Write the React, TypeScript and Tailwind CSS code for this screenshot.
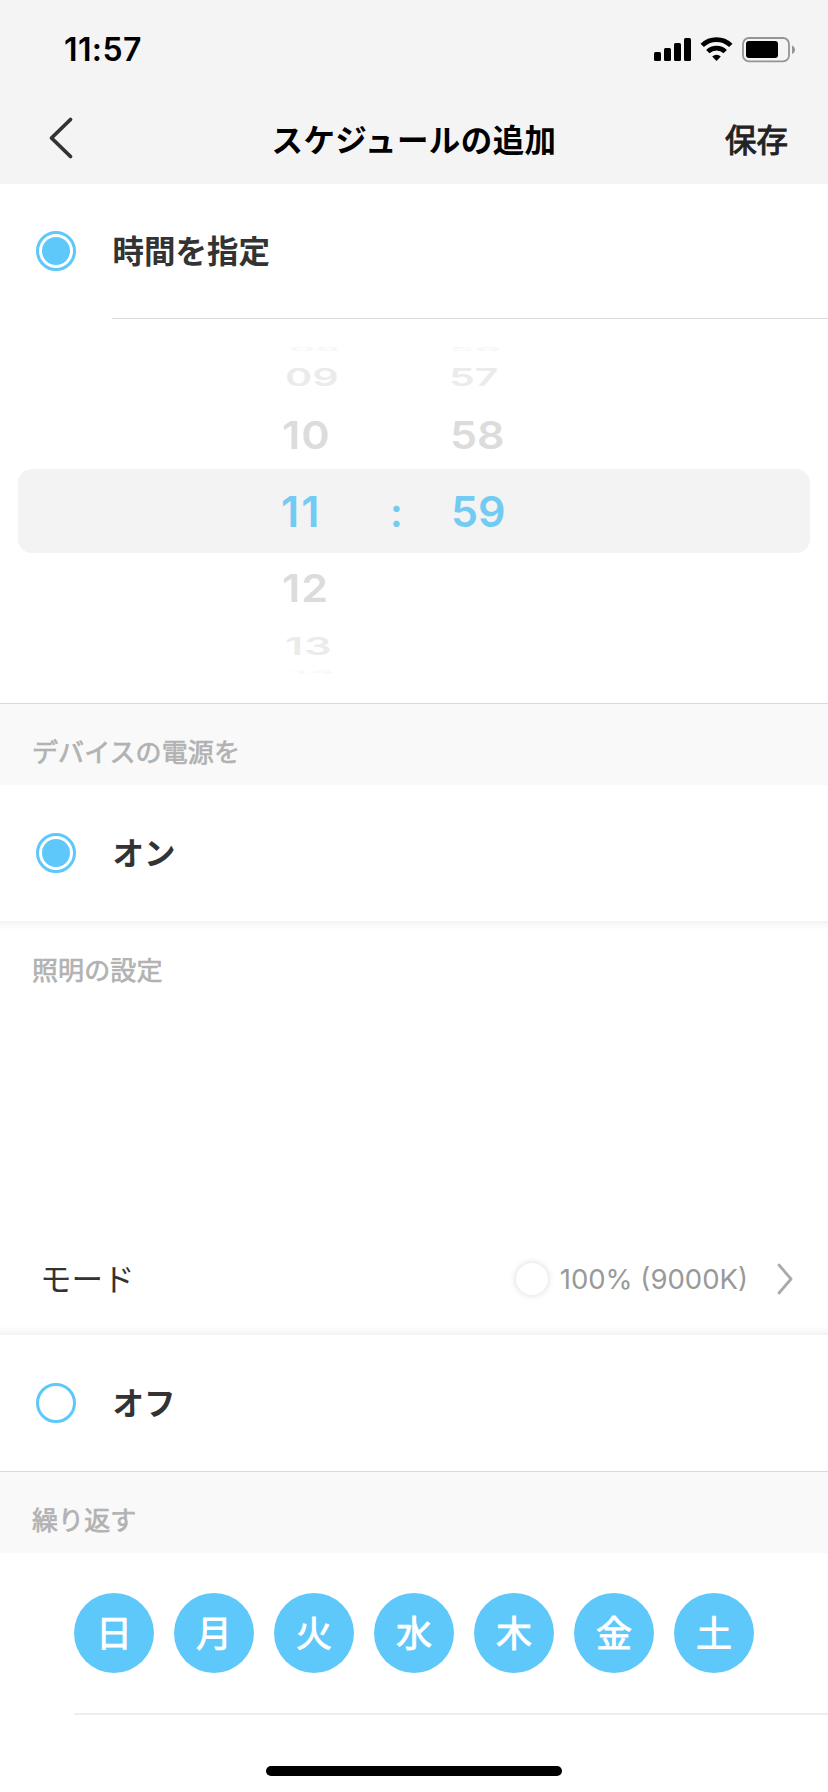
const weekdays = ["日", "月", "火", "水", "木", "金", "土"];

const hours = [
  { value: "08", cls: "h-2 pl-[49px] text-[#f7f7f7]", scale: "scale-x-[0.92] scale-y-[0.12]" },
  { value: "09", cls: "h-12 pl-[45px] text-[#ebebeb]", scale: "scale-x-[0.96] scale-y-[0.56]" },
  { value: "10", cls: "h-[68px] pl-[42px] text-[#dcdcdc]", scale: "tracking-[1px] scale-y-[0.9]" },
  { value: "11", cls: "h-[84px] pl-[41px] text-[#72cbf2]", scale: "tracking-[2px]" },
  { value: "12", cls: "h-[70px] pl-[42px] text-[#dcdcdc]", scale: "tracking-[1px] scale-y-[0.9]" },
  { value: "13", cls: "h-[46px] pl-[45px] text-[#ebebeb]", scale: "tracking-[1px] scale-y-[0.56]" },
  { value: "14", cls: "h-1.5 pl-[49px] text-[#f9f9f9]", scale: "scale-y-[0.11]" },
];

const minutes = [
  { value: "56", cls: "h-2 pl-[47px] text-[#f7f7f7]", scale: "scale-x-[0.95] scale-y-[0.12]" },
  { value: "57", cls: "h-12 pl-[47px] text-[#ebebeb]", scale: "scale-x-[0.95] scale-y-[0.56]" },
  { value: "58", cls: "h-[68px] pl-[48px] text-[#dcdcdc]", scale: "scale-y-[0.9]" },
  { value: "59", cls: "h-[84px] pl-[49px] text-[#72cbf2]", scale: "" },
];

function Radio({ checked = false }: { checked?: boolean }) {
  return (
    <span className="flex size-10 shrink-0 items-center justify-center rounded-full border-3 border-[#5fc8fa]">
      {checked && <span className="size-7 rounded-full bg-[#5fc8fa]" />}
    </span>
  );
}

function OptionRow({ label, checked, cls }: { label: string; checked?: boolean; cls: string }) {
  return (
    <div className={`flex items-center gap-[36.5px] bg-white pl-9 ${cls}`}>
      <Radio checked={checked} />
      <span className="pt-px text-[31.5px] leading-10 font-bold text-[#333]">{label}</span>
    </div>
  );
}

function SectionTitle({ children }: { children: string }) {
  return (
    <div className="h-[82px] border-t border-[#d9d9d9] bg-[#f9f9f9] pt-[29px] pl-8 text-[26px] leading-10 tracking-[0.1px] text-[#b2b2b2] [-webkit-text-stroke:0.7px_#b2b2b2]">
      {children}
    </div>
  );
}

function WheelColumn({ items, className }: { items: typeof hours; className: string }) {
  return (
    <div className={className}>
      {items.map((item) => (
        <div key={item.value} className={`flex items-center ${item.cls}`}>
          <span className={`block origin-left text-[43px] leading-none font-semibold ${item.scale}`}>
            {item.value}
          </span>
        </div>
      ))}
    </div>
  );
}

function StatusIcons() {
  return (
    <svg className="mt-px" width="142" height="26" viewBox="0 0 142 26" fill="none">
      {/* signal */}
      <g fill="#000">
        <rect x="0" y="15" width="7" height="9" rx="1.5" />
        <rect x="10" y="11" width="7" height="13" rx="1.5" />
        <rect x="20" y="6" width="7" height="18" rx="1.5" />
        <rect x="30" y="1" width="7" height="23" rx="1.5" />
      </g>
      {/* wifi */}
      <g stroke="#000" strokeWidth="4.8">
        <path d="M48.2 8.4a20.5 20.5 0 0 1 28.6 0" />
        <path d="M53.8 14.6a12.5 12.5 0 0 1 17.4 0" />
      </g>
      <path d="M58.2 19.4a6.5 6.5 0 0 1 8.6 0L62.5 24z" fill="#000" />
      {/* battery */}
      <rect x="89" y="1" width="46" height="23.4" rx="6" stroke="#949494" strokeWidth="1.8" />
      <rect x="92" y="4" width="32" height="17" rx="3" fill="#000" />
      <path d="M138 8.5c4 1.5 4 7 0 8.5z" fill="#949494" />
    </svg>
  );
}

export default function App() {
  return (
    <div className="h-[1792px] w-[828px] overflow-hidden bg-white font-[Inter,'Noto_Sans_CJK_JP',sans-serif]">
      {/* Status bar + nav */}
      <header className="h-[184px] bg-[#f4f4f4]">
        <div className="flex h-24 items-start justify-between pt-[36px] pr-8 pl-16">
          <span className="text-[32px] leading-7 font-semibold tracking-[0.4px] text-black">11:57</span>
          <StatusIcons />
        </div>
        <div className="grid h-[88px] grid-cols-[160px_1fr_160px] items-center">
          <svg className="-mt-1 ml-12" width="28" height="44" viewBox="0 0 28 44" fill="none">
            <path d="M22.5 3.5 3.5 22l19 18.5" stroke="#333" strokeWidth="3.8" strokeLinecap="round" strokeLinejoin="round" />
          </svg>
          <h1 className="pt-0.5 text-center text-[31.5px] leading-10 font-bold tracking-[0.4px] text-black">
            スケジュールの追加
          </h1>
          <button className="pt-0.5 pr-10 text-right text-[31.5px] leading-10 text-[#222] [-webkit-text-stroke:1px_#222]">
            保存
          </button>
        </div>
      </header>

      {/* Time picker */}
      <section>
        <OptionRow label="時間を指定" checked cls="h-[134px]" />
        <div className="ml-28 h-px bg-[#d9d9d9]" />
        <div className="relative h-[384px] pt-[26px]">
          <div className="absolute inset-x-[18px] top-[150px] h-[84px] rounded-[14px] bg-[#f3f3f3]" />
          <div className="relative flex pl-[240px]">
            <WheelColumn items={hours} className="w-[150px]" />
            <span className="mt-[148px] w-3 text-[40px] leading-none font-semibold text-[#72cbf2]">:</span>
            <WheelColumn items={minutes} className="w-[148px]" />
          </div>
        </div>
      </section>

      {/* Power */}
      <SectionTitle>デバイスの電源を</SectionTitle>
      <OptionRow label="オン" checked cls="h-[136px]" />

      <section className="flex h-[414px] flex-col justify-between bg-white shadow-[inset_0_10px_9px_-7px_#f0f0f0,inset_0_-10px_9px_-7px_#f0f0f0]">
        <h2 className="pt-[30px] pl-8 text-[26px] leading-10 tracking-[0.1px] text-[#b2b2b2] [-webkit-text-stroke:0.7px_#b2b2b2]">
          照明の設定
        </h2>
        <div className="flex h-[112px] items-center pr-[34px] pl-10">
          <span className="pt-px text-[31.5px] leading-10 text-[#333]">モード</span>
          <span className="ml-auto size-8 rounded-full bg-white shadow-[0_0_7px_rgba(0,0,0,0.16)]" />
          <span className="ml-3 text-[27.5px] leading-10 text-[#999]">100% (9000K)</span>
          <svg className="ml-7" width="18" height="34" viewBox="0 0 18 34" fill="none">
            <path d="M3 3l12 14L3 31" stroke="#aaa" strokeWidth="2.8" strokeLinecap="round" strokeLinejoin="round" />
          </svg>
        </div>
      </section>

      <OptionRow label="オフ" cls="h-[136px]" />

      {/* Repeat */}
      <SectionTitle>繰り返す</SectionTitle>
      <div className="flex gap-5 pt-10 pb-10 pl-[74px]">
        {weekdays.map((day) => (
          <span
            key={day}
            className="flex size-20 items-center justify-center rounded-full bg-[#5fc8fa] pt-0.5 text-[36px] leading-none text-white [-webkit-text-stroke:0.9px_#fff]"
          >
            {day}
          </span>
        ))}
      </div>
      <div className="ml-[74px] h-0.5 bg-[#eee]" />

      {/* Home indicator */}
      <div className="mx-auto mt-[51px] h-2.5 w-[296px] rounded-full bg-black" />
    </div>
  );
}
